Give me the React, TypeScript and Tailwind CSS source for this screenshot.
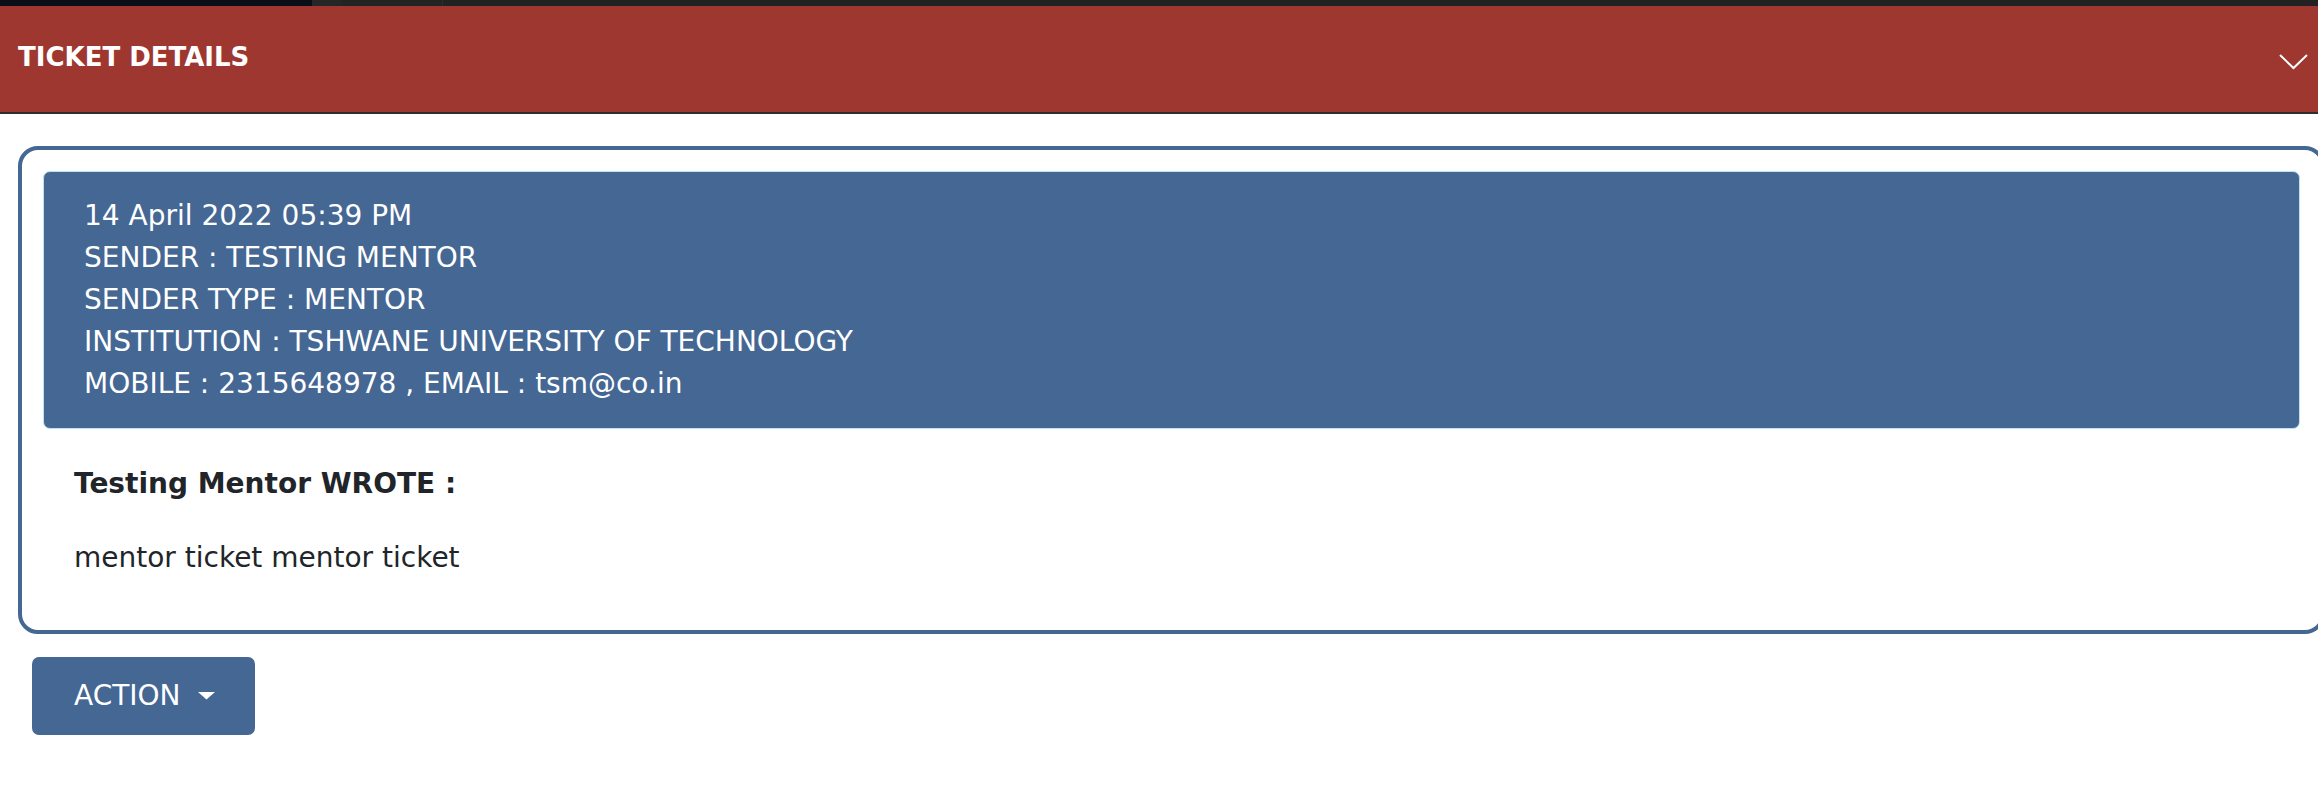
import React from "react";

export default function App() {
  return (
    <div
      className="w-[2318px] h-[808px] overflow-hidden bg-white text-[#212529]"
      style={{ fontFamily: '"DejaVu Sans", sans-serif' }}
    >
      {/* top dark strip */}
      <div className="flex h-[6px]">
        <div className="w-[312px] bg-[#0a0e16]" />
        <div className="w-[30px] bg-[#262626]" />
        <div className="w-[101px] bg-[#232323] border-r border-[#2c2c2c]" />
        <div className="flex-1 bg-[#222222]" />
      </div>
      {/* header */}
      <div className="flex h-[108px] items-center justify-between border-b-2 border-[#2e2e2e] bg-[#9e372f] pl-[18px] pr-[10px] pb-[4px]">
        <span className="text-[26px] font-bold leading-none text-white">TICKET DETAILS</span>
        <svg width="30" height="18" viewBox="0 0 30 18" className="mt-[10px]">
          <path d="M2 2 L15.5 15 L29 2" fill="none" stroke="white" strokeWidth="2" />
        </svg>
      </div>

      {/* card */}
      <div className="mt-[32px] ml-[18px] w-[2307px] rounded-[20px] border-[4px] border-[#446794] px-[21px] pt-[21px] pb-[51px]">
        <div className="rounded-[7px] border-[1.5px] border-[#bfe3ea] bg-[#446794] pl-[40px] py-[23px] text-[28px] leading-[42px] text-white">
          <div>14 April 2022 05:39 PM</div>
          <div>SENDER : TESTING MENTOR</div>
          <div>SENDER TYPE : MENTOR</div>
          <div>INSTITUTION : TSHWANE UNIVERSITY OF TECHNOLOGY</div>
          <div>MOBILE : 2315648978 , EMAIL : tsm@co.in</div>
        </div>
        <div className="mt-[34px] pl-[31px] text-[28px] leading-[42px]">
          <div className="font-bold">Testing Mentor WROTE :</div>
          <div className="mt-[32px]">mentor ticket mentor ticket</div>
        </div>
      </div>

      {/* action button */}
      <div className="mt-[23px] ml-[32px]">
        <button className="flex h-[78px] w-[223px] items-center rounded-[7px] bg-[#446794] pl-[42px] text-[28px] text-white">
          <span>ACTION</span>
          <svg width="17" height="8" viewBox="0 0 17 8" className="ml-[17px]">
            <path d="M0 0 L17 0 L8.5 7.5 Z" fill="white" />
          </svg>
        </button>
      </div>
    </div>
  );
}
